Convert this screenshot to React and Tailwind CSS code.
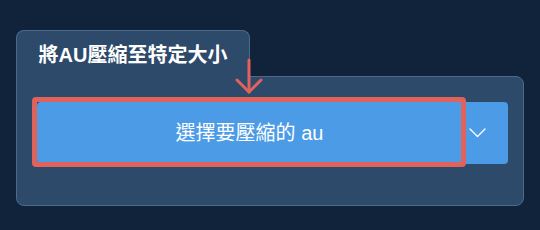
import React from 'react'

const App = () => {
    return (
        <div
            className="w-[540px] h-[230px] bg-[#10233a] pt-[30px] pl-[16px]"
            style={{ fontFamily: '"Liberation Sans", "Noto Sans CJK TC", sans-serif' }}
        >
            <div className="relative w-[508px]">
                {/* tab */}
                <div className="relative z-10 -mb-px flex h-[47px] w-[234px] items-center justify-center rounded-t-lg border border-b-0 border-[#4b6a8c] bg-[#2d4a6b] pt-[2px]">
                    <h2 className="text-[20px] font-bold text-white">將AU壓縮至特定大小</h2>
                </div>

                {/* body */}
                <div className="h-[130px] rounded-b-lg rounded-tr-lg border border-[#4b6a8c] bg-[#2d4a6b] pl-[20px] pr-[15px] pt-[25px]">
                    <div className="flex h-[62px]">
                        <div className="relative flex-1">
                            <button className="flex h-full w-full items-center justify-center rounded-l bg-[#4b9be6] text-[20px] text-white">
                                選擇要壓縮的 au
                            </button>
                            <div className="pointer-events-none absolute -top-[5px] -left-[5px] -right-[4px] -bottom-[3px] rounded-[4px] border-[5px] border-[#e0625c]" />
                        </div>
                        <button className="flex w-[46px] items-center justify-start rounded-r bg-[#4b9be6] pl-[7px]">
                            <svg width="17" height="10" viewBox="0 0 17 10" fill="none" stroke="white" strokeWidth="1.4" strokeLinecap="round" strokeLinejoin="round">
                                <path d="M1 1l7.5 7.5L16 1" />
                            </svg>
                        </button>
                    </div>
                </div>

                {/* pointer arrow */}
                <svg className="absolute left-[219px] top-[28px] z-20" width="28" height="36" viewBox="0 0 28 36" fill="none" stroke="#e0625c" strokeWidth="3" strokeLinecap="round" strokeLinejoin="round">
                    <path d="M14 2v32" />
                    <path d="M2 22l12 12 12-12" />
                </svg>
            </div>
        </div>
    )
}

export default App
